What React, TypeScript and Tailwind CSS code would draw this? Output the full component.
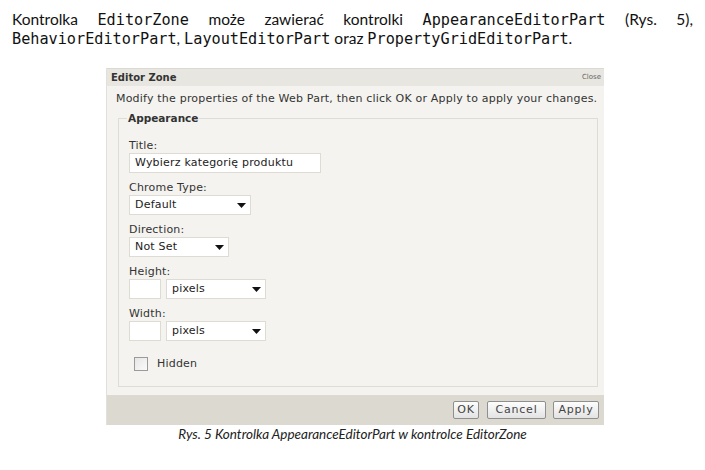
const calibri = { fontFamily: 'Lato, "Open Sans", sans-serif' }

function Code({ children }: { children: React.ReactNode }) {
  return <span className="font-['DejaVu_Sans_Mono',monospace] text-[15.2px] leading-[19px]">{children}</span>
}

function Select({ value, width }: { value: string; width: string }) {
  return (
    <div className={`${width} h-[20px] bg-white border border-[#dedbd3] flex items-center justify-between pl-[5px] pr-[4px]`}>
      <span>{value}</span>
      <svg width="9" height="5" viewBox="0 0 9 5">
        <path d="M0 0 H9 L4.5 5 Z" fill="#111" />
      </svg>
    </div>
  )
}

function Field({ label, children }: { label: string; children: React.ReactNode }) {
  return (
    <div className="flex flex-col">
      <div className="h-[14px] leading-[14px] text-[#333]">{label}</div>
      <div>{children}</div>
    </div>
  )
}

function SizeField({ label }: { label: string }) {
  return (
    <Field label={label}>
      <div className="flex gap-[5px]">
        <div className="w-[32px] h-[20px] bg-white border border-[#dedbd3]" />
        <Select value="pixels" width="w-[100px]" />
      </div>
    </Field>
  )
}

export default function App() {
  return (
    <div className="w-[705px] h-[470px] bg-white relative overflow-hidden">
      <div
        className="h-[48px] pl-[12px] pr-[12px] pt-[10px] text-[15.5px] leading-[19px] text-[#111] text-justify"
        style={calibri}
      >
        <div className="h-[19px] [text-align-last:justify]">
          Kontrolka <Code>EditorZone</Code> może zawierać kontrolki <Code>AppearanceEditorPart</Code> (Rys. 5),
        </div>
        <div className="h-[19px]">
          <Code>BehaviorEditorPart</Code>, <Code>LayoutEditorPart</Code> oraz <Code>PropertyGridEditorPart</Code>.
        </div>
      </div>

      <div className="ml-[106px] mt-[20px] w-[498px] bg-[#f4f3ef] border-l border-[#e2e0da] font-['DejaVu_Sans',sans-serif] text-[11px] tracking-[0.2px] text-[#222]">
        <div className="h-[18px] bg-[#e8e6e0] border-t border-[#dcd9d2] flex items-center justify-between pl-[4px] pr-[3px] tracking-normal">
          <span className="font-bold text-[10px] text-[#333]">Editor Zone</span>
          <span className="text-[7px] text-[#666]">Close</span>
        </div>
        <div className="pt-[6px] pl-[9px] pr-[6px] pb-[8px]">
          <div className="text-[#333] h-[14px] leading-[14px]">
            Modify the properties of the Web Part, then click OK or Apply to apply your changes.
          </div>
          <fieldset className="mt-[6px] ml-[2px] border border-[#dedcd6] pl-[10px] pr-[10px] pb-[13px]">
            <legend className="px-[1px] font-bold text-[#333] text-[10.5px] tracking-normal ml-[-2px] leading-[13px]">
              Appearance
            </legend>
            <div className="flex flex-col gap-[8px] pt-[14px]">
              <Field label="Title:">
                <div className="w-[192px] h-[20px] bg-white border border-[#dedbd3] flex items-center pl-[5px]">
                  Wybierz kategorię produktu
                </div>
              </Field>
              <Field label="Chrome Type:">
                <Select value="Default" width="w-[122px]" />
              </Field>
              <Field label="Direction:">
                <Select value="Not Set" width="w-[100px]" />
              </Field>
              <SizeField label="Height:" />
              <SizeField label="Width:" />
              <div className="flex items-center gap-[9px] pl-[5px] mt-[7px]">
                <div className="w-[14px] h-[14px] border border-[#9a9a9a] bg-gradient-to-br from-[#e6e6e6] to-[#fafafa]" />
                <span className="text-[#333]">Hidden</span>
              </div>
            </div>
          </fieldset>
        </div>
        <div className="h-[30px] bg-[#dcd9d1] flex items-center justify-end pr-[5px] tracking-[0.8px]">
          <button className="w-[26px] h-[18px] border border-[#8f8f8f] rounded-[2px] bg-gradient-to-b from-[#fdfdfd] to-[#e3e3e3] text-[#444] text-[11px] leading-[16px]">
            OK
          </button>
          <button className="ml-[8px] w-[59px] h-[18px] border border-[#8f8f8f] rounded-[2px] bg-gradient-to-b from-[#fdfdfd] to-[#e3e3e3] text-[#444] text-[11px] leading-[16px]">
            Cancel
          </button>
          <button className="ml-[7px] w-[46px] h-[18px] border border-[#8f8f8f] rounded-[2px] bg-gradient-to-b from-[#fdfdfd] to-[#e3e3e3] text-[#444] text-[11px] leading-[16px]">
            Apply
          </button>
        </div>
      </div>

      <div className="mt-[1px] text-center italic text-[13.5px] leading-[16px] text-[#222]" style={calibri}>
        Rys. 5 Kontrolka AppearanceEditorPart w kontrolce EditorZone
      </div>
    </div>
  )
}
